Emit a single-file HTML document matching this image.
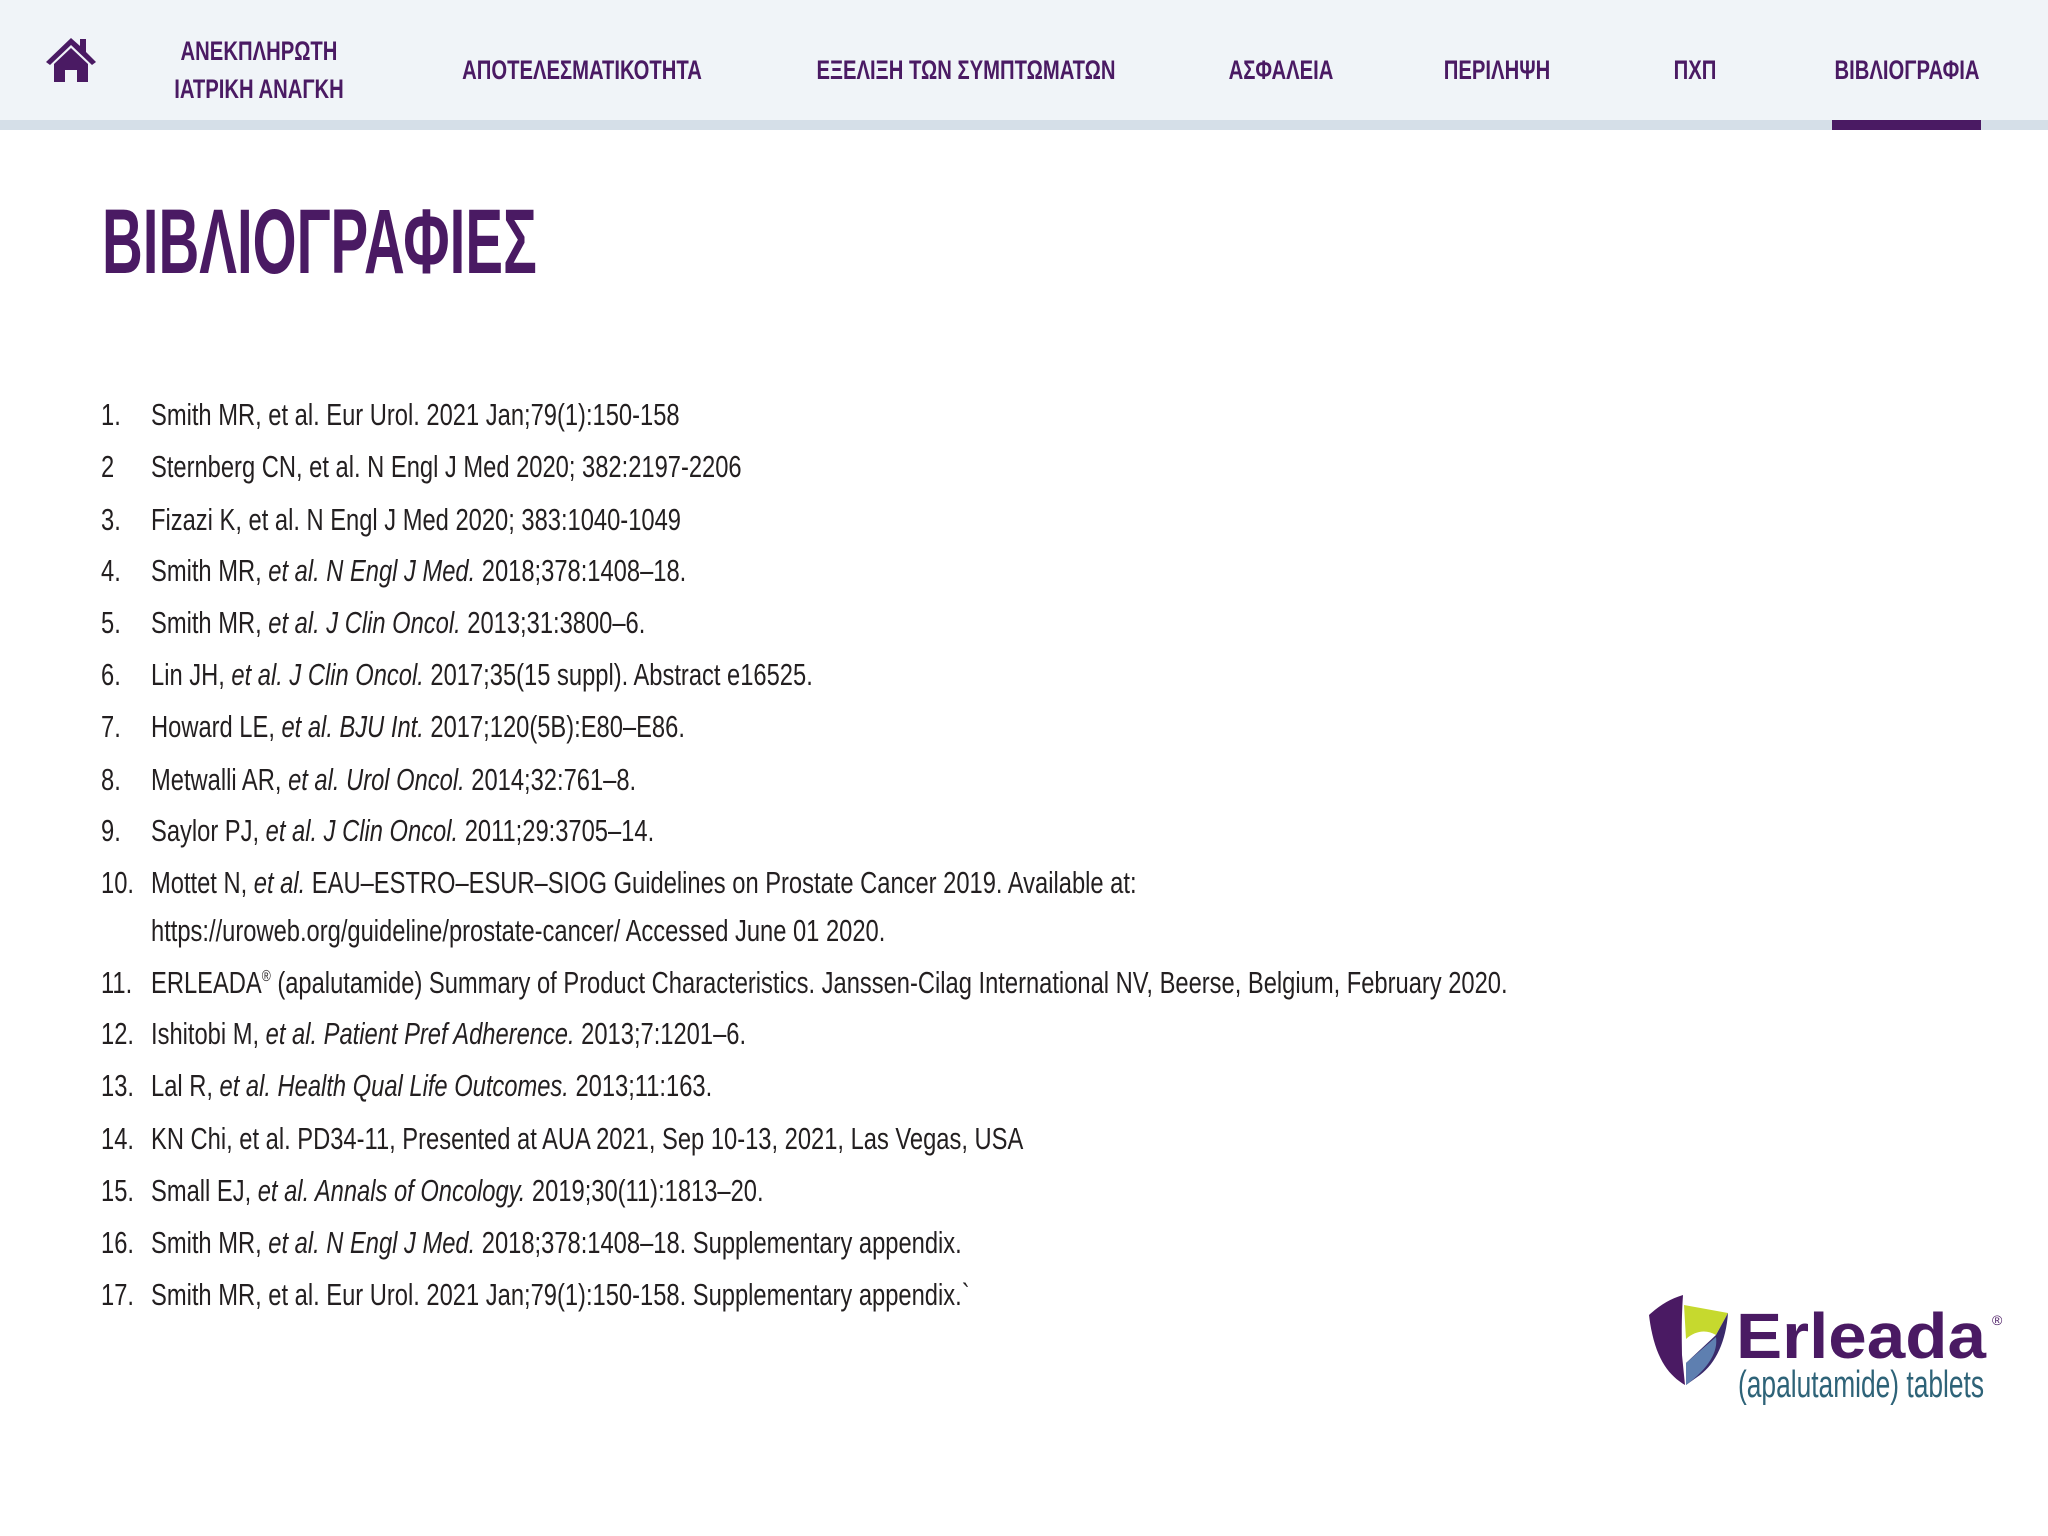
<!DOCTYPE html>
<html><head><meta charset="utf-8"><style>
body{margin:0;width:2048px;height:1536px;background:#fff;position:relative;overflow:hidden;font-family:"Liberation Sans",sans-serif}
.nav{position:absolute;left:0;top:0;width:2048px;height:120px;background:#f0f4f8}
.navb{position:absolute;left:0;top:120px;width:2048px;height:10px;background:#d5dfe8}
.act{position:absolute;left:1832px;top:120px;width:149px;height:10px;background:#4a1a63}
.ni{position:absolute;color:#4a1a63;font-weight:bold;font-size:27px;line-height:38px;white-space:nowrap;transform:translateX(-50%) scaleX(0.75);text-align:center}
h1{position:absolute;left:102px;top:192px;margin:0;font-size:92px;line-height:100px;color:#4a1a63;font-weight:bold;transform:scaleX(0.614);transform-origin:left;white-space:nowrap}
.l{position:absolute;height:52px;line-height:52px;font-size:31px;color:#231f20;white-space:nowrap;transform:scaleX(0.765);transform-origin:left}
.n{left:101px}.t{left:151px}
sup{font-size:16px;line-height:0;vertical-align:12px}
</style></head><body>
<div class="nav"></div><div class="navb"></div><div class="act"></div>
<svg style="position:absolute;left:44px;top:36px" width="54" height="48" viewBox="0 0 54 48"><path d="M27 2 L2 26 L6 29 L27 9 L48 29 L52 26 L42 16 L42 3 L36 3 L36 10 Z" fill="#4a1a63"/><path d="M10 28 L27 12 L44 28 L44 46 L33 46 L33 34 L21 34 L21 46 L10 46 Z" fill="#4a1a63"/></svg>
<div class="ni" style="left:259px;top:32px">ΑΝΕΚΠΛΗΡΩΤΗ<br>ΙΑΤΡΙΚΗ ΑΝΑΓΚΗ</div>
<div class="ni" style="left:582px;top:51px">ΑΠΟΤΕΛΕΣΜΑΤΙΚΟΤΗΤΑ</div>
<div class="ni" style="left:966px;top:51px">ΕΞΕΛΙΞΗ ΤΩΝ ΣΥΜΠΤΩΜΑΤΩΝ</div>
<div class="ni" style="left:1281px;top:51px">ΑΣΦΑΛΕΙΑ</div>
<div class="ni" style="left:1497px;top:51px">ΠΕΡΙΛΗΨΗ</div>
<div class="ni" style="left:1695px;top:51px">ΠΧΠ</div>
<div class="ni" style="left:1907px;top:51px">ΒΙΒΛΙΟΓΡΑΦΙΑ</div>
<h1>ΒΙΒΛΙΟΓΡΑΦΙΕΣ</h1>

<div class="l n" style="top:389px">1.</div><div class="l t" style="top:389px">Smith MR, et al. Eur Urol. 2021 Jan;79(1):150-158</div>
<div class="l n" style="top:441px">2</div><div class="l t" style="top:441px">Sternberg CN, et al. N Engl J Med 2020; 382:2197-2206</div>
<div class="l n" style="top:494px">3.</div><div class="l t" style="top:494px">Fizazi K, et al. N Engl J Med 2020; 383:1040-1049</div>
<div class="l n" style="top:545px">4.</div><div class="l t" style="top:545px">Smith MR, <i>et al. N Engl J Med.</i> 2018;378:1408–18.</div>
<div class="l n" style="top:597px">5.</div><div class="l t" style="top:597px">Smith MR, <i>et al. J Clin Oncol.</i> 2013;31:3800–6.</div>
<div class="l n" style="top:649px">6.</div><div class="l t" style="top:649px">Lin JH, <i>et al. J Clin Oncol.</i> 2017;35(15 suppl). Abstract e16525.</div>
<div class="l n" style="top:701px">7.</div><div class="l t" style="top:701px">Howard LE, <i>et al. BJU Int.</i> 2017;120(5B):E80–E86.</div>
<div class="l n" style="top:754px">8.</div><div class="l t" style="top:754px">Metwalli AR, <i>et al. Urol Oncol.</i> 2014;32:761–8.</div>
<div class="l n" style="top:805px">9.</div><div class="l t" style="top:805px">Saylor PJ, <i>et al. J Clin Oncol.</i> 2011;29:3705–14.</div>
<div class="l n" style="top:857px">10.</div><div class="l t" style="top:857px">Mottet N, <i>et al.</i> EAU–ESTRO–ESUR–SIOG Guidelines on Prostate Cancer 2019. Available at:</div>
<div class="l t" style="top:905px">https://uroweb.org/guideline/prostate-cancer/ Accessed June 01 2020.</div>
<div class="l n" style="top:957px">11.</div><div class="l t" style="top:957px">ERLEADA<sup>®</sup> (apalutamide) Summary of Product Characteristics. Janssen-Cilag International NV, Beerse, Belgium, February 2020.</div>
<div class="l n" style="top:1008px">12.</div><div class="l t" style="top:1008px">Ishitobi M, <i>et al. Patient Pref Adherence.</i> 2013;7:1201–6.</div>
<div class="l n" style="top:1060px">13.</div><div class="l t" style="top:1060px">Lal R, <i>et al. Health Qual Life Outcomes.</i> 2013;11:163.</div>
<div class="l n" style="top:1113px">14.</div><div class="l t" style="top:1113px">KN Chi, et al. PD34-11, Presented at AUA 2021, Sep 10-13, 2021, Las Vegas, USA</div>
<div class="l n" style="top:1165px">15.</div><div class="l t" style="top:1165px">Small EJ, <i>et al. Annals of Oncology.</i> 2019;30(11):1813–20.</div>
<div class="l n" style="top:1217px">16.</div><div class="l t" style="top:1217px">Smith MR, <i>et al. N Engl J Med.</i> 2018;378:1408–18. Supplementary appendix.</div>
<div class="l n" style="top:1269px">17.</div><div class="l t" style="top:1269px">Smith MR, et al. Eur Urol. 2021 Jan;79(1):150-158. Supplementary appendix.`</div>

<svg style="position:absolute;left:1640px;top:1285px" width="370" height="130" viewBox="0 0 370 130">
<path d="M9 30 C20 20 30 14 43 10 C41 40 42 62 42 70 L45 100 C28 90 14 72 9 30Z" fill="#4a1a63"/>
<path d="M44 20 L88 28 L76 50 C66 44 55 46 46 54Z" fill="#c6d92e"/>
<path d="M88 28 L76 50 L46 78 L46 100 L60 90 C76 78 86 56 88 28Z" fill="#3a2a6a"/>
<path d="M46 78 L76 52 C78 66 70 82 46 100Z" fill="#5e7fb0"/>
<text x="96" y="73" font-family="Liberation Sans,sans-serif" font-weight="bold" font-size="64" fill="#4a1a63" textLength="250" lengthAdjust="spacingAndGlyphs">Erleada</text>
<text x="352" y="40" font-family="Liberation Sans,sans-serif" font-size="14" fill="#4a1a63">®</text>
<text x="98" y="112" font-family="Liberation Sans,sans-serif" font-size="38" fill="#2e6378" textLength="246" lengthAdjust="spacingAndGlyphs">(apalutamide) tablets</text>
</svg>
</body></html>
